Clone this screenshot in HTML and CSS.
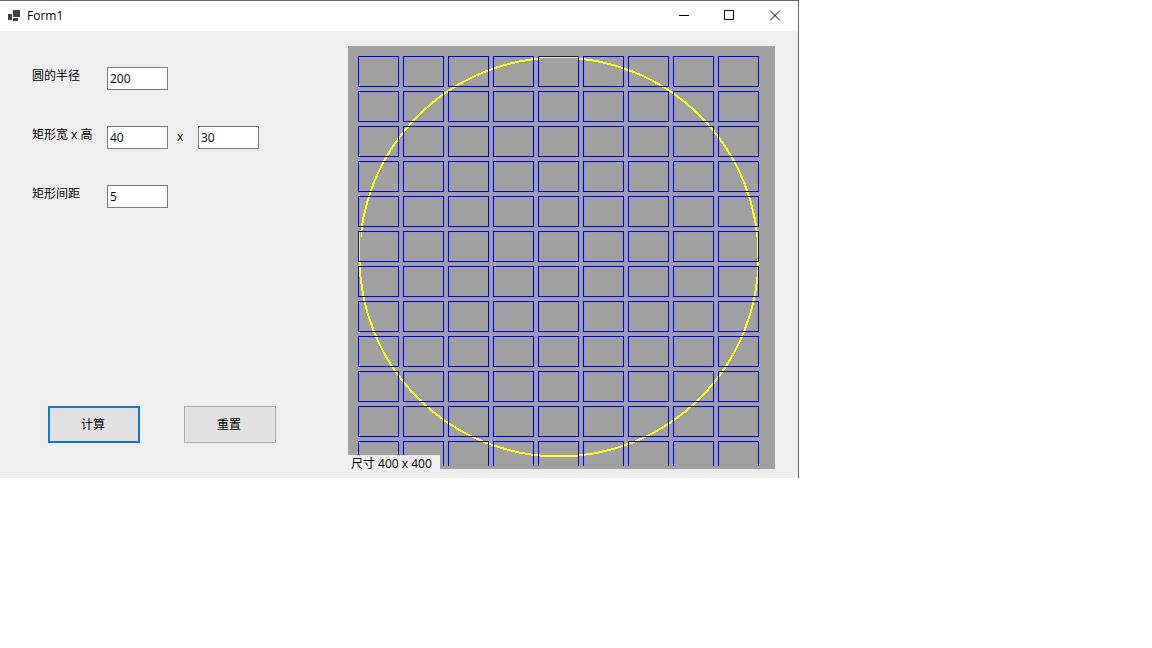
FILE: index.html
```html
<!DOCTYPE html>
<html lang="zh-CN">
<head>
<meta charset="utf-8">
<title>Form1</title>
<link rel="stylesheet" href="styles.css">
</head>
<body>
<main class="window">
  <header class="titlebar">
    <svg class="app-icon" width="12" height="12" viewBox="0 0 12 12" aria-hidden="true"><path d="M5 0h7v7H5zM0 4h4v6H0zM5 8h5v3H5z" fill="#424242"/></svg>
    <h1 class="title">Form1</h1>
    <div class="window-buttons">
      <button class="window-button" type="button" aria-label="最小化"><svg width="12" height="12" viewBox="0 0 12 12"><path d="M0 5.5h10"/></svg></button>
      <button class="window-button" type="button" aria-label="最大化"><svg width="12" height="12" viewBox="0 0 12 12"><path d="M.5.5h9v9h-9z"/></svg></button>
      <button class="window-button" type="button" aria-label="关闭"><svg width="12" height="12" viewBox="0 0 12 12"><path d="M1 .5l10 10M11 .5l-10 10"/></svg></button>
    </div>
  </header>
  <div class="client">
    <form class="controls">
      <div class="fields">
        <div class="field">
          <label class="label" for="radius">圆的半径</label>
          <input class="box" id="radius" type="text" value="200">
        </div>
        <div class="field">
          <label class="label" for="rect-width">矩形宽 x 高</label>
          <input class="box" id="rect-width" type="text" value="40">
          <label class="times" for="rect-height">x</label>
          <input class="box" id="rect-height" type="text" value="30">
        </div>
        <div class="field">
          <label class="label" for="spacing">矩形间距</label>
          <input class="box" id="spacing" type="text" value="5">
        </div>
      </div>
      <div class="actions">
        <button class="button button-default" type="button">计算</button>
        <button class="button" type="button">重置</button>
      </div>
    </form>
    <section class="canvas">
      <svg class="drawing" width="427" height="420" viewBox="0 0 427 420" aria-hidden="true">
        <defs>
          <pattern id="edge" x="10" y="10" width="45" height="35" patternUnits="userSpaceOnUse">
            <path d="M1.5 29.5v-28h38M41.5 0v31.5H0M44.5 0v35" fill="none" stroke="#9292e4"/>
          </pattern>
          <pattern id="cell" x="10" y="10" width="45" height="35" patternUnits="userSpaceOnUse">
            <rect x=".5" y=".5" width="40" height="30" fill="none" stroke="#0808b0"/>
          </pattern>
        </defs>
        <rect x="10" y="10" width="401" height="410" fill="url(#edge)"/>
        <circle cx="211" cy="211" r="199.5" fill="none" stroke="#ffff20" stroke-width="2" shape-rendering="crispEdges"/>
        <rect x="10" y="10" width="401" height="410" fill="url(#cell)"/>
        <path d="M191 12.5h39M12.5 186v29" stroke="#a0a0a0"/>
        <path d="M191 11.5h39M11.5 186v29" stroke="#e6e6e6"/>
        <path d="M191 10.5h39M10.5 186v29" stroke="#202020"/>
      </svg>
      <output class="size">尺寸 400 x 400</output>
    </section>
  </div>
</main>
</body>
</html>
```
FILE: styles.css
```css
* { box-sizing: border-box; }
body {
  margin: 0;
  background: #fff;
  color: #000;
  font: 12px/16px "Open Sans", "Noto Sans CJK SC", sans-serif;
}
.window {
  width: fit-content;
  background: #efefef;
  border-top: 1px solid #686868;
  border-right: 1px solid #686868;
}
.titlebar {
  display: flex;
  align-items: center;
  height: 30px;
  padding-left: 8px;
  background: #fff;
}
.app-icon { margin-right: 7px; }
.title { margin: 0; font-size: 12px; font-weight: 400; }
.window-buttons { display: flex; margin-left: auto; }
.window-button {
  display: grid;
  place-items: center;
  width: 45px;
  height: 30px;
  padding: 0 1px 0 0;
  border: 0;
  background: none;
}
.window-button svg { fill: none; stroke: #000; }
.client { display: flex; padding: 15px 23px 9px 32px; }
.controls {
  display: flex;
  flex-direction: column;
  justify-content: space-between;
  width: 316px;
  padding: 21px 0 26px;
}
.fields { display: grid; gap: 36px; }
.field { display: flex; align-items: flex-start; }
.label { width: 75px; padding-top: 1px; }
.box {
  width: 61px;
  height: 23px;
  padding: 0 2px;
  border: 1px solid #7a7a7a;
  background: #fff;
  color: #000;
  font: inherit;
}
.times { width: 30px; padding: 3px 0 0 9px; }
.actions { display: flex; gap: 44px; padding-left: 16px; }
.button {
  width: 92px;
  height: 37px;
  padding: 0 2px 0 0;
  border: 1px solid #adadad;
  background: #e1e1e1;
  color: #000;
  font: inherit;
}
.button-default { border: 2px solid #1078c8; }
.canvas {
  position: relative;
  padding-bottom: 3px;
  background: #a0a0a0;
}
.drawing { display: block; }
.size {
  position: absolute;
  bottom: 0;
  left: 0;
  width: 92px;
  height: 14px;
  padding-left: 3px;
  background: #efefef;
  line-height: 18px;
  white-space: nowrap;
}
```
